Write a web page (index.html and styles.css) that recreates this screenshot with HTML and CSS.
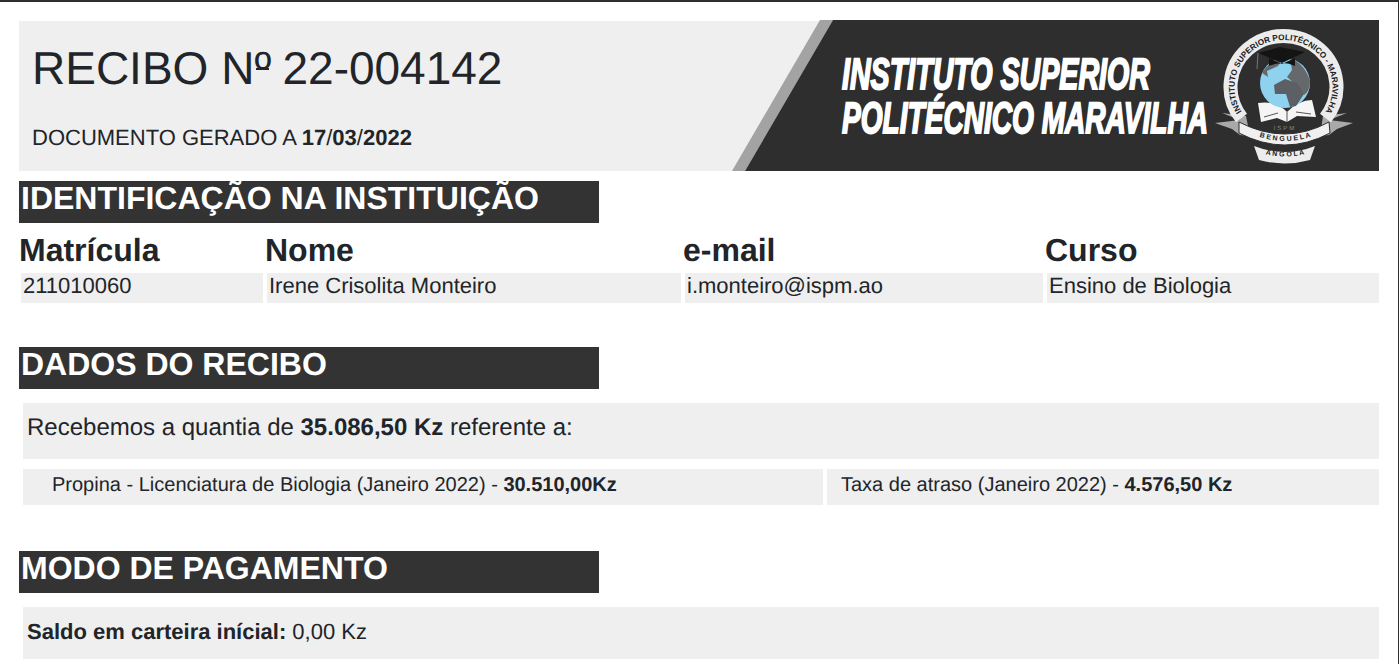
FILE: index.html
```html
<!DOCTYPE html>
<html lang="pt">
<head>
<meta charset="utf-8">
<title>Recibo</title>
<link rel="stylesheet" href="styles.css">
</head>
<body>
<main class="page">
  <header class="head">
    <div class="head-text">
      <h1 class="title">RECIBO N<span class="ord">º</span> 22-004142</h1>
      <p class="generated">DOCUMENTO GERADO A <b>17</b>/<b>03</b>/<b>2022</b></p>
    </div>
    <svg class="logo" viewBox="732 20 647 151" width="647" height="151" aria-label="Instituto Superior Politécnico Maravilha">
      <polygon points="820,20 833,20 745,171 732,171" fill="#a3a3a3"/>
      <polygon points="833,20 1379,20 1379,171 745,171" fill="#2e2e2e"/>
      <text class="logo-name" x="842" y="89" textLength="308" lengthAdjust="spacingAndGlyphs">INSTITUTO SUPERIOR</text>
      <text class="logo-name" x="842" y="133" textLength="366" lengthAdjust="spacingAndGlyphs">POLITÉCNICO MARAVILHA</text>

      <!-- ribbon tails -->
      <path d="M1215 123 L1240 120 L1222 113 L1246 116 L1250 136 L1240 135 L1232 129 Z" fill="#a9a9a9"/>
      <path d="M1353 123 L1329 120 L1347 113 L1323 116 L1320 136 L1329 135 L1337 129 Z" fill="#a9a9a9"/>

      <!-- Angola band -->
      <path d="M1254 146 Q1285 158 1315 146 L1310 160 Q1285 167 1259 160 Z" fill="#ececec"/>
      <path id="angolaPath" d="M1260 153 Q1285 160 1310 153" fill="none"/>
      <text class="band-text"><textPath href="#angolaPath" startOffset="50%" text-anchor="middle">A N G O L A</textPath></text>

      <!-- Benguela band -->
      <path d="M1239 122 Q1285 146 1329 122 L1330 133 Q1285 157 1239 133 Z" fill="#f0f0f0" stroke="#2e2e2e" stroke-width="1"/>
      <path id="benguelaPath" d="M1243 130 Q1285 152 1327 130" fill="none"/>
      <text class="band-text"><textPath href="#benguelaPath" startOffset="50%" text-anchor="middle">B E N G U E L A</textPath></text>

      <!-- ring -->
      <path class="ring-outer" d="M1241.5 118 A53 51 0 1 1 1325.5 118"/>
      <path id="ringPath" d="M1252 123 A49 47 0 1 1 1315 123" fill="none"/>
      <text class="ring-text"><textPath href="#ringPath" startOffset="50%" text-anchor="middle">INSTITUTO SUPERIOR POLITÉCNICO - MARAVILHA</textPath></text>

      <text class="ispm" x="1285" y="130" text-anchor="middle">ISPM</text>

      <!-- book -->
      <path d="M1258 103 Q1275 100 1287 112 Q1299 100 1312 100 L1316 117 L1297 116 L1287 122 L1277 118 L1261 122 Z" fill="#f5f5f5"/>
      <path d="M1287 112 L1287 122 M1264 117 L1278 113 M1311 114 L1296 112" stroke="#555" stroke-width="1" fill="none"/>

      <!-- globe -->
      <circle cx="1285" cy="83" r="25" fill="#8fd2f0"/>
      <path d="M1262 73 Q1270 60 1283 58 L1278 66 L1267 71 L1268 77 Z" fill="#66696c"/>
      <path d="M1290 58 Q1305 64 1310 81 Q1310 91 1304 95 L1296 85 L1287 77 L1292 70 Z" fill="#66696c"/>
      <path d="M1274 85 L1285 79 L1297 83 L1304 94 L1296 106 L1290 107 L1286 94 L1275 94 Z" fill="#5c5f63"/>
      <!-- cap -->
      <path d="M1280 47 L1305 52 L1282 63 L1258 53 Z" fill="#141414"/>
      <path d="M1269 58 L1269 66 Q1283 60 1295 66 L1295 58 L1282 64 Z" fill="#141414"/>
      <path d="M1258 53 L1257 69" stroke="#777" stroke-width="1" fill="none"/>
    </svg>
  </header>

  <h2 class="band first">IDENTIFICAÇÃO NA INSTITUIÇÃO</h2>
  <div class="ident">
    <div class="col"><h3 class="col-head">Matrícula</h3><div class="col-val">211010060</div></div>
    <div class="col"><h3 class="col-head">Nome</h3><div class="col-val">Irene Crisolita Monteiro</div></div>
    <div class="col"><h3 class="col-head">e-mail</h3><div class="col-val">i.monteiro@ispm.ao</div></div>
    <div class="col"><h3 class="col-head">Curso</h3><div class="col-val">Ensino de Biologia</div></div>
  </div>

  <h2 class="band second">DADOS DO RECIBO</h2>
  <div class="panel quantia">Recebemos a quantia de <b>35.086,50 Kz</b> referente a:</div>
  <div class="items">
    <div class="item item-a">Propina - Licenciatura de Biologia (Janeiro 2022) - <b>30.510,00Kz</b></div>
    <div class="item item-b">Taxa de atraso (Janeiro 2022) - <b>4.576,50 Kz</b></div>
  </div>

  <h2 class="band third">MODO DE PAGAMENTO</h2>
  <div class="panel saldo"><b>Saldo em carteira inícial:</b> 0,00 Kz</div>
</main>
</body>
</html>
```
FILE: styles.css
```css
html, body {
  margin: 0;
  padding: 0;
  background: #fff;
}
body {
  height: 664px;
  overflow: hidden;
  box-sizing: border-box;
  border-top: 2px solid #2e2e2e;
  border-right: 1px solid #2e2e2e;
  font-family: "Liberation Sans", Arial, sans-serif;
  color: #212529;
  text-rendering: geometricPrecision;
}
.page {
  padding: 19px 19px 0 19px;
}
.head {
  display: flex;
  height: 150px;
  background: #efefef;
}
.head-text {
  flex: 1;
  padding-left: 13px;
}
.title {
  margin: 20px 0 0;
  font-size: 46px;
  line-height: 55px;
  font-weight: 400;
}
.ord {
  letter-spacing: -1.5px;
  background: linear-gradient(#212529, #212529) no-repeat 50% 52% / 13px 2px;
}
.generated {
  margin: 29px 0 0;
  font-size: 22px;
  line-height: 25px;
}
.logo {
  flex: none;
  display: block;
  margin-top: -1px;
}
.logo-name {
  font-size: 44px;
  font-weight: 700;
  font-style: italic;
  fill: #fff;
  stroke: #fff;
  stroke-width: 2px;
}
.ring-outer {
  fill: none;
  stroke: #ececec;
  stroke-width: 14px;
}
.ring-text {
  font-size: 8.2px;
  font-weight: 700;
  fill: #202020;
}
.band-text {
  font-size: 7px;
  font-weight: 700;
  fill: #202020;
}
.ispm {
  font-size: 6px;
  letter-spacing: 2px;
  fill: #8a8a8a;
}
.band {
  width: 580px;
  height: 42px;
  margin: 0;
  box-sizing: border-box;
  padding-left: 2px;
  background: #333;
  color: #fff;
  font-size: 32px;
  line-height: 34px;
  font-weight: 700;
}
.first { margin-top: 10px; }
.second { margin-top: 44px; }
.third { margin-top: 46px; }
.ident {
  display: grid;
  grid-template-columns: 242px 414px 358px 332px;
  column-gap: 4px;
  padding-left: 2px;
  margin-top: 8px;
}
.col-head {
  margin: 0 0 0 -2px;
  padding-bottom: 4px;
  font-size: 32px;
  line-height: 38px;
  font-weight: 700;
}
.col-val {
  height: 30px;
  padding-left: 2px;
  background: #efefef;
  font-size: 22px;
  line-height: 25px;
}
.panel {
  margin-left: 4px;
  background: #efefef;
  padding-left: 4px;
}
.quantia {
  height: 56px;
  margin-top: 14px;
  font-size: 24px;
  line-height: 50px;
}
.items {
  display: grid;
  grid-template-columns: 800px 552px;
  column-gap: 4px;
  margin: 10px 0 0 4px;
}
.item {
  height: 36px;
  background: #efefef;
  font-size: 20px;
  line-height: 32px;
}
.item-a { padding-left: 29px; }
.item-b { padding-left: 14px; }
.saldo {
  height: 52px;
  margin-top: 14px;
  font-size: 22px;
  line-height: 50px;
}
```
